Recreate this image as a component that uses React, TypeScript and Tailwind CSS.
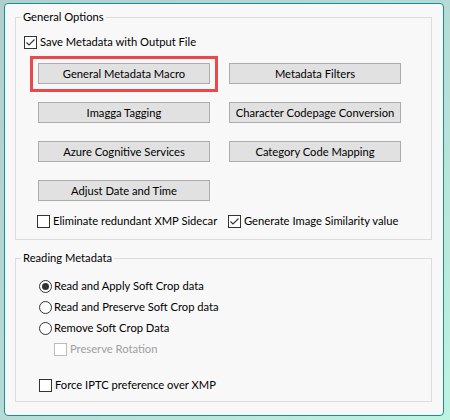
import React from "react";

const FONT = { fontFamily: 'Lato, "Noto Sans", "Liberation Sans", sans-serif' };

function Check({ checked, disabled }: { checked?: boolean; disabled?: boolean }) {
  return (
    <span
      className={
        "w-[13px] h-[13px] shrink-0 border bg-white flex items-center justify-center " +
        (disabled ? "border-[#bcbcbc]" : "border-[#333333]")
      }
    >
      {checked && (
        <svg width="11" height="11" viewBox="0 0 11 11">
          <polyline points="1.5,5.5 4,8 9.5,2.5" fill="none" stroke="#333333" strokeWidth="1.1" />
        </svg>
      )}
    </span>
  );
}

function CheckRow({ label, checked, disabled }: { label: string; checked?: boolean; disabled?: boolean }) {
  return (
    <div className="flex items-center h-[16px] gap-[3px]">
      <Check checked={checked} disabled={disabled} />
      <span className={"whitespace-nowrap " + (disabled ? "text-[#a0a0a0]" : "text-black")}>{label}</span>
    </div>
  );
}

function Radio({ label, checked }: { label: string; checked?: boolean }) {
  return (
    <div className="flex items-center h-[16px] gap-[2px]">
      <span className="w-[13px] h-[13px] shrink-0 rounded-full border border-[#333333] bg-white flex items-center justify-center">
        {checked && <span className="w-[7px] h-[7px] rounded-full bg-[#333333]" />}
      </span>
      <span className="whitespace-nowrap text-black">{label}</span>
    </div>
  );
}

function Btn({ label, children }: { label: string; children?: React.ReactNode }) {
  return (
    <div className="relative">
      <div className="h-[21px] border border-[#adadad] bg-[#e1e1e1] flex items-center justify-center text-black whitespace-nowrap">
        {label}
      </div>
      {children}
    </div>
  );
}

export default function App() {
  return (
    <div
      className="w-[450px] h-[420px] bg-gradient-to-br from-[#b2cfce] via-[#b6dbd6] to-[#bdf3e1] pt-[3px] pl-[4px] text-[11.2px] leading-[16px]"
      style={FONT}
    >
      <div className="w-[440px] h-[413px] bg-[#f8f8f8] border border-[#11939b] rounded-[4px] pl-[10px] pt-[5px]">
        <fieldset className="w-[417px] border border-[#dcdcdc] p-0 m-0">
          <legend className="ml-[5px] px-[2px] text-black">General Options</legend>
          <div className="pl-[8px] pt-[9px] pb-[10px]">
            <CheckRow label="Save Metadata with Output File" checked />
            <div className="ml-[14px] mt-[13px] grid grid-cols-[172px_172px] gap-x-[19px] gap-y-[18px]">
              <Btn label="General Metadata Macro">
                <div className="absolute left-[-8px] right-[-8px] top-[-7px] bottom-[-8px] border-[3px] border-[#e8494b]" />
              </Btn>
              <Btn label="Metadata Filters" />
              <Btn label="Imagga Tagging" />
              <Btn label="Character Codepage Conversion" />
              <Btn label="Azure Cognitive Services" />
              <Btn label="Category Code Mapping" />
              <Btn label="Adjust Date and Time" />
            </div>
            <div className="ml-[13px] mt-[12px] grid grid-cols-[172px_172px] gap-x-[19px]">
              <CheckRow label="Eliminate redundant XMP Sidecar" />
              <CheckRow label="Generate Image Similarity value" checked />
            </div>
          </div>
        </fieldset>
        <fieldset className="w-[417px] border border-[#dcdcdc] p-0 m-0 mt-[10px]">
          <legend className="ml-[5px] px-[2px] text-black">Reading Metadata</legend>
          <div className="pl-[23px] pt-[12px] pb-[8px] flex flex-col">
            <Radio label="Read and Apply Soft Crop data" checked />
            <div className="mt-[5px]">
              <Radio label="Read and Preserve Soft Crop data" />
            </div>
            <div className="mt-[5px]">
              <Radio label="Remove Soft Crop Data" />
            </div>
            <div className="mt-[5px] ml-[15px]">
              <CheckRow label="Preserve Rotation" disabled />
            </div>
            <div className="mt-[20px]">
              <CheckRow label="Force IPTC preference over XMP" />
            </div>
          </div>
        </fieldset>
      </div>
    </div>
  );
}
